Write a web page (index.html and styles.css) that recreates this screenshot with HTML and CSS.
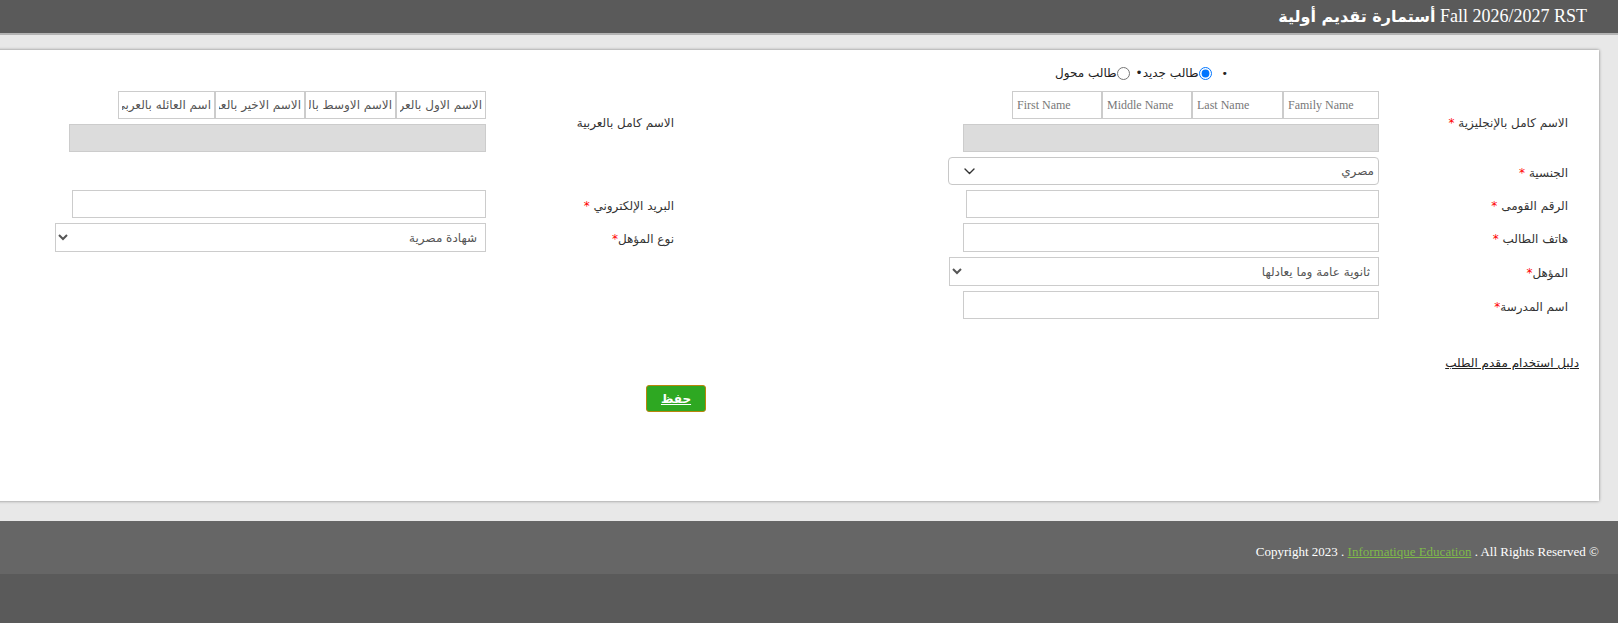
FILE: index.html
```html
<!DOCTYPE html>
<html lang="ar" dir="rtl">
<head>
<meta charset="utf-8">
<title>أستمارة تقديم أولية</title>
<link rel="stylesheet" href="styles.css">
</head>
<body>
<header class="topbar">
  <h1 class="title"><span class="title-en">Fall 2026/2027 RST</span> <span class="title-ar">أستمارة تقديم أولية</span></h1>
</header>

<main class="page">
  <section class="card">
    <form class="form-grid">
      <div class="l1"></div>
      <div class="f1 radio-row">
        <span class="dot">•</span>
        <label class="radio"><input type="radio" name="type" checked>طالب جديد•</label>
        <label class="radio"><input type="radio" name="type">طالب محول</label>
      </div>

      <div class="l1 label">الاسم كامل بالإنجليزية <span class="req">*</span></div>
      <div class="f1 name-block">
        <div class="names names-en">
          <input class="nm w90" placeholder="First Name">
          <input class="nm w90" placeholder="Middle Name">
          <input class="nm w91" placeholder="Last Name">
          <input class="nm w96" placeholder="Family Name">
        </div>
        <input class="readonly w416" readonly>
      </div>
      <div class="l2 label">الاسم كامل بالعربية</div>
      <div class="f2 name-block">
        <div class="names names-ar">
          <input class="nm w90" placeholder="الاسم الاول بالعربي">
          <input class="nm w91" placeholder="الاسم الاوسط بالعربي">
          <input class="nm w90" placeholder="الاسم الاخير بالعربي">
          <input class="nm w97" placeholder="اسم العائله بالعربي">
        </div>
        <input class="readonly w417" readonly>
      </div>

      <div class="l1 label">الجنسية <span class="req">*</span></div>
      <div class="f1 select-wrap w431">
        <select class="select-custom">
          <option>مصري</option>
        </select>
        <svg class="chev" width="11" height="7" viewBox="0 0 11 7" aria-hidden="true"><path d="M1 1 L5.5 5.5 L10 1" fill="none" stroke="#333" stroke-width="1.4" stroke-linecap="round" stroke-linejoin="round"/></svg>
      </div>

      <div class="l1 label">الرقم القومى <span class="req">*</span></div>
      <div class="f1"><input class="text w413" type="text"></div>
      <div class="l2 label">البريد الإلكتروني <span class="req">*</span></div>
      <div class="f2"><input class="text w414" type="email"></div>

      <div class="l1 label">هاتف الطالب <span class="req">*</span></div>
      <div class="f1"><input class="text w416 h29" type="text"></div>
      <div class="l2 label">نوع المؤهل<span class="req">*</span></div>
      <div class="f2">
        <select class="select-native w431">
          <option>شهادة مصرية</option>
        </select>
      </div>

      <div class="l1 label">المؤهل<span class="req">*</span></div>
      <div class="f1">
        <select class="select-native w430">
          <option>ثانوية عامة وما يعادلها</option>
        </select>
      </div>

      <div class="l1 label">اسم المدرسة<span class="req">*</span></div>
      <div class="f1"><input class="text w416" type="text"></div>
    </form>

    <div class="guide-row"><a class="guide" href="#">دليل استخدام مقدم الطلب</a></div>
    <div class="actions"><a class="btn-save" href="#">حفظ</a></div>
  </section>
</main>

<footer class="footer">
  <p class="copy" dir="ltr">Copyright 2023 . <a href="#" class="brand">Informatique Education</a> . All Rights Reserved ©</p>
</footer>
</body>
</html>
```

FILE: styles.css
```css
html, body {
  margin: 0;
  padding: 0;
}
body {
  background: #5a5a5a;
  font-family: "DejaVu Sans", sans-serif;
  color: #333;
  overflow-x: hidden;
}

/* Header */
.topbar {
  background: #5a5a5a;
  height: 33px;
  border-bottom: 2px solid #b3b3b3;
  padding-right: 31px;
}
.title {
  margin: 0;
  font-weight: normal;
  line-height: 33px;
  color: #fff;
  font-size: 18px;
  font-family: "Liberation Serif", "DejaVu Sans", serif;
  white-space: nowrap;
}
.title-ar {
  font-family: "DejaVu Sans", sans-serif;
  font-weight: bold;
  font-size: 16px;
}

/* Page area */
.page {
  background: #e8e8e8;
  padding: 15px 19px 20px 0;
}
.card {
  background: #fff;
  margin-left: -6px;
  height: 451px;
  box-sizing: border-box;
  box-shadow: 0 0 3px rgba(0, 0, 0, 0.45);
  padding: 14px 20px 0 0;
}

/* Grid form */
.form-grid {
  display: grid;
  grid-template-columns: 189px 431px 274px 188px 431px;
  row-gap: 5px;
  align-items: center;
  margin: 0 11px 0 0;
}
.l1 { grid-column: 1; }
.f1 { grid-column: 2; }
.l2 { grid-column: 4; }
.f2 { grid-column: 5; }

.label {
  font-size: 12px;
  color: #333;
  white-space: nowrap;
  padding-top: 3px;
}
.req { color: #f00; }

.f1, .f2 { justify-self: start; }

/* radio row */
.radio-row {
  display: flex;
  align-items: center;
  height: 18px;
  margin-bottom: 4px;
  padding-right: 151px;
  font-size: 12px;
  color: #222;
  white-space: nowrap;
}
.dot {
  font-size: 11px;
  margin-left: 10px;
}
.radio {
  display: flex;
  align-items: center;
  margin-left: 6px;
}
.radio input {
  margin: 0;
  width: 13px;
  height: 13px;
}

/* name blocks */
.name-block {
  display: flex;
  flex-direction: column;
  align-items: flex-start;
  gap: 5px;
}
.names { display: flex; }
.names-en { direction: ltr; }
.names-ar { direction: rtl; }
.nm {
  box-sizing: border-box;
  height: 28px;
  border: 1px solid #ccc;
  margin: 0;
  padding: 0 4px;
  background: #fff;
  outline: none;
}
.names-en .nm {
  font-family: "Liberation Serif", serif;
  font-size: 12px;
  direction: ltr;
}
.names-en .nm::placeholder { color: #777; }
.names-ar .nm {
  font-family: "DejaVu Sans", sans-serif;
  font-size: 12px;
  direction: rtl;
  padding: 0 3px;
}
.names-ar .nm::placeholder { color: #555; }

.readonly {
  box-sizing: border-box;
  height: 28px;
  margin: 0;
  border: 1px solid #ccc;
  background: #dcdcdc;
}

.text {
  box-sizing: border-box;
  height: 28px;
  margin: 0;
  border: 1px solid #ccc;
  background: #fff;
  display: block;
}
.h29 { height: 29px; }

/* selects */
.select-wrap { position: relative; }
.select-custom {
  box-sizing: border-box;
  width: 100%;
  height: 28px;
  margin: 0;
  display: block;
  appearance: none;
  -webkit-appearance: none;
  border: 1px solid #c8c8c8;
  border-radius: 4px;
  background: #fff;
  padding: 0 4px 0 30px;
  font-family: "DejaVu Sans", sans-serif;
  font-size: 12px;
  color: #555;
}
.chev {
  position: absolute;
  left: 16px;
  top: 11px;
  pointer-events: none;
}
.select-native {
  box-sizing: border-box;
  height: 29px;
  margin: 0;
  display: block;
  border: 1px solid #ccc;
  border-radius: 0;
  background: #fff;
  padding: 0 4px;
  font-family: "DejaVu Sans", sans-serif;
  font-size: 12px;
  color: #555;
}

/* widths */
.w90 { width: 90px; }
.w91 { width: 91px; }
.w96 { width: 96px; }
.w97 { width: 97px; }
.w413 { width: 413px; }
.w414 { width: 414px; }
.w416 { width: 416px; }
.w417 { width: 417px; }
.w430 { width: 430px; }
.w431 { width: 431px; }

/* guide link and save */
.guide-row {
  margin-top: 34px;
  line-height: 18px;
}
.guide {
  color: #222;
  font-size: 12px;
  text-decoration: underline;
}
.actions {
  margin-top: 13px;
  padding-right: 873px;
  display: flex;
}
.btn-save {
  box-sizing: border-box;
  width: 60px;
  height: 27px;
  background: #2ea822;
  border: 1px solid #b8860b;
  border-radius: 3px;
  color: #fff;
  font-weight: bold;
  font-size: 12px;
  text-decoration: underline;
  display: flex;
  align-items: center;
  justify-content: center;
}

/* footer */
.footer {
  background: #666;
  height: 53px;
  box-sizing: border-box;
  padding: 22px 19px 0 0;
}
.copy {
  margin: 0;
  text-align: right;
  color: #fff;
  font-family: "Liberation Serif", serif;
  font-size: 13px;
  line-height: 18px;
}
.brand {
  color: #7fba4a;
  text-decoration: underline;
}
```
